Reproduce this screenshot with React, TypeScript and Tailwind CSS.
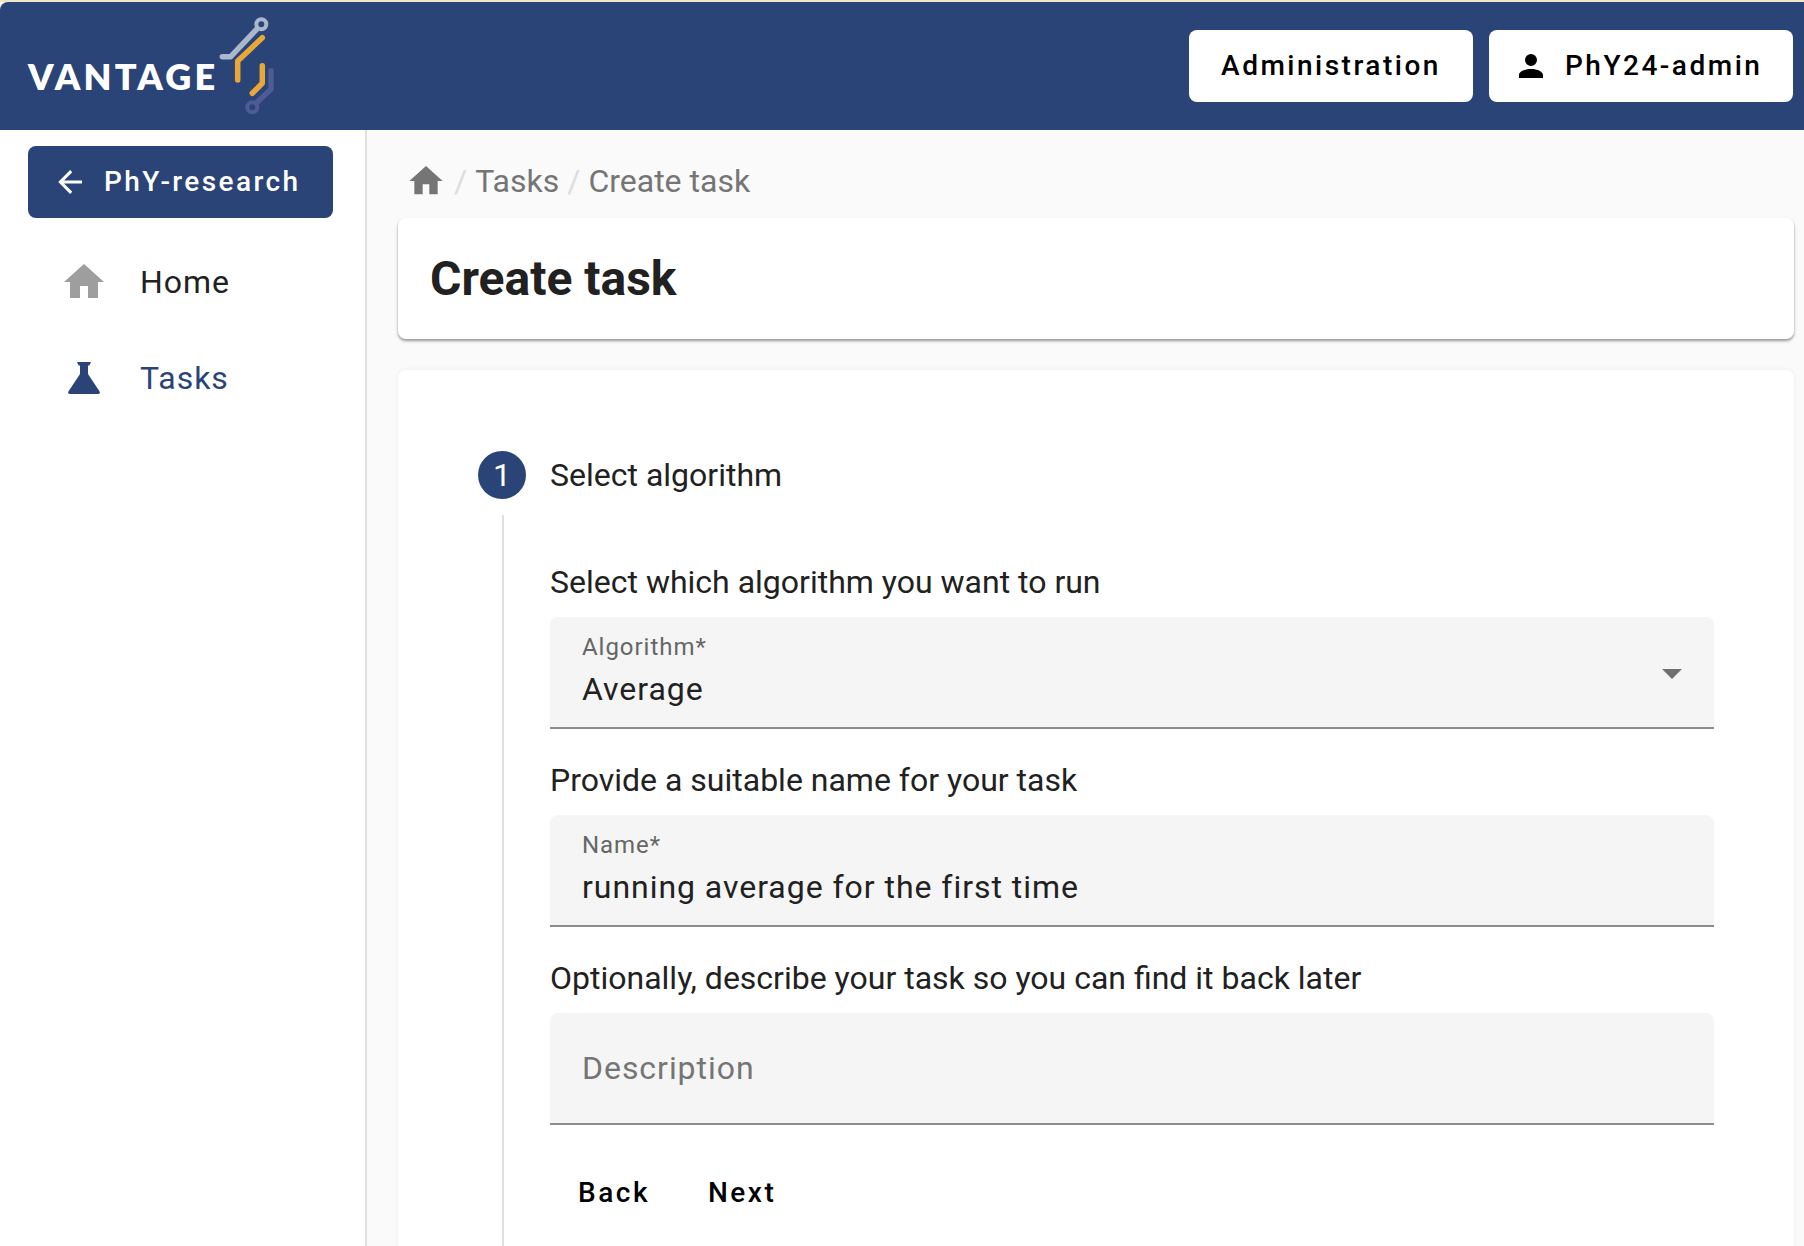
const BRAND = "#2b4478";

function MdiIcon({ path, className }: { path: string; className: string }) {
  return (
    <svg viewBox="0 0 24 24" fill="currentColor" className={className}>
      <path d={path} />
    </svg>
  );
}

const HOME = "M10 20v-6h4v6h5v-8h3L12 3 2 12h3v8z";
const ARROW_LEFT = "M20,11V13H8L13.5,18.5L12.08,19.92L4.16,12L12.08,4.08L13.5,5.5L8,11H20Z";
const ACCOUNT =
  "M12,4A4,4 0 0,1 16,8A4,4 0 0,1 12,12A4,4 0 0,1 8,8A4,4 0 0,1 12,4M12,14C16.42,14 20,15.79 20,18V20H4V18C4,15.79 7.58,14 12,14Z";
const FLASK =
  "M8.5 4h7l-.8 1.7H14V10l5.8 8.8c.4.6 0 1.2-.7 1.2H4.900c-.7 0-1.100-.6-.7-1.200L10 10V5.700H9.300z";

function Logo() {
  return (
    <div className="flex items-center">
      <span className="mt-[20px] font-['Lato',sans-serif] text-[36px] leading-none font-extrabold tracking-[0.09em] text-white">
        VANTAGE
      </span>
      <svg viewBox="220 15 60 103" fill="none" strokeLinecap="round" strokeLinejoin="round" strokeWidth="5.5" className="ml-[1px] h-[103px] w-[60px]">
        <circle cx="262.300" cy="24.300" r="5" stroke="#a9b8cc" strokeWidth="4" />
        <path d="M257 30 231.700 56.700h-8.400" stroke="#a9b8cc" />
        <path d="M263.300 37.700 238.700 61v19M263.300 65.700v17.600l-10 10" stroke="#e8a838" />
        <path d="M272 70.700v18.600l-14.500 13.500" stroke="#4e5b95" />
        <circle cx="253.300" cy="107.300" r="5" stroke="#4e5b95" strokeWidth="4" />
      </svg>
    </div>
  );
}

function HeaderButton({ children, className }: { children: React.ReactNode; className: string }) {
  return (
    <button className={`flex h-[72px] items-center rounded-[8px] bg-white text-[28px] font-medium tracking-[0.0892857em] text-black ${className}`}>
      {children}
    </button>
  );
}

function Field({ label, value, arrow }: { label: string; value: string; arrow?: boolean }) {
  return (
    <div className="relative flex h-[112px] flex-col rounded-t-[8px] border-b-2 border-[#8c8c8c] bg-[#f5f5f5] px-[32px] pt-[14px]">
      <span className="text-[24px] leading-[32px] tracking-[0.04em] text-[#666666]">{label}</span>
      <span className="mt-[6px] text-[32px] leading-[40px] tracking-[0.03em] text-[#212121]">{value}</span>
      {arrow && <div className="absolute top-[52px] right-[32px] h-0 w-0 border-x-[10px] border-t-[10px] border-x-transparent border-t-[#707070]" />}
    </div>
  );
}

export default function App() {
  return (
    <div className="flex h-[1246px] flex-col overflow-hidden bg-[#fafafa] font-['Roboto',sans-serif]">
      <div className="h-[2px] shrink-0 bg-[#efe6c8]" />
      <header className="flex h-[128px] shrink-0 items-center justify-between rounded-tl-[8px] bg-[#2b4478] pr-[11px] pl-[28px]">
        <Logo />
        <div className="flex gap-[16px]">
          <HeaderButton className="w-[284px] justify-center">Administration</HeaderButton>
          <HeaderButton className="w-[304px] gap-[16px] pl-[24px]">
            <MdiIcon path={ACCOUNT} className="h-[36px] w-[36px]" />
            PhY24-admin
          </HeaderButton>
        </div>
      </header>

      <div className="flex flex-1">
        <aside className="w-[367px] border-r-2 border-[#e0e0e0] bg-white pt-[16px]">
          <button className="ml-[28px] flex h-[72px] w-[305px] items-center gap-[16px] rounded-[8px] bg-[#2b4478] pl-[24px] text-[28px] font-medium tracking-[0.085em] text-white">
            <MdiIcon path={ARROW_LEFT} className="h-[36px] w-[36px]" />
            PhY-research
          </button>
          <nav className="mt-[16px]">
            <div className="flex h-[96px] items-center gap-[32px] pl-[60px] text-[32px] tracking-[0.03em] text-[#212121]">
              <MdiIcon path={HOME} className="h-[48px] w-[48px] text-[#9e9e9e]" />
              Home
            </div>
            <div className="flex h-[96px] items-center gap-[32px] pl-[60px] text-[32px] tracking-[0.03em] text-[#2b4478]">
              <MdiIcon path={FLASK} className="h-[48px] w-[48px]" />
              Tasks
            </div>
          </nav>
        </aside>

        <main className="flex-1 pr-[10px] pl-[31px]">
          <div className="flex h-[88px] items-center gap-[8px] pt-[14px] pl-[8px] text-[32px] text-[#757575]">
            <MdiIcon path={HOME} className="h-[40px] w-[40px]" />
            <span className="text-[#dddddd]">/</span>
            <span>Tasks</span>
            <span className="text-[#dddddd]">/</span>
            <span>Create task</span>
          </div>

          <div className="flex h-[121px] items-center rounded-[8px] bg-white pl-[32px] shadow-[0_2px_3px_rgba(0,0,0,0.4)]">
            <h1 className="text-[48px] font-bold text-[#212121]">Create task</h1>
          </div>

          <section className="mt-[31px] h-[900px] rounded-[8px] bg-white pt-[81px] pr-[80px] pl-[80px] shadow-[0_0_5px_rgba(0,0,0,0.05)]">
            <div className="flex items-center gap-[24px]">
              <div className="flex h-[48px] w-[48px] items-center justify-center rounded-full bg-[#2b4478] text-[32px] text-white">1</div>
              <span className="text-[32px] text-[#212121]">Select algorithm</span>
            </div>
            <div className="mt-[16px] ml-[24px] h-[800px] border-l-2 border-[#e0e0e0] pt-[43px] pl-[46px]">
              <p className="mb-[11px] text-[32px] leading-[48px] text-[#212121]">Select which algorithm you want to run</p>
              <Field label="Algorithm*" value="Average" arrow />
              <p className="mt-[27px] mb-[11px] text-[32px] leading-[48px] text-[#212121]">Provide a suitable name for your task</p>
              <Field label="Name*" value="running average for the first time" />
              <p className="mt-[27px] mb-[11px] text-[32px] leading-[48px] text-[#212121]">Optionally, describe your task so you can find it back later</p>
              <div className="flex h-[112px] items-center rounded-t-[8px] border-b-2 border-[#8c8c8c] bg-[#f5f5f5] px-[32px] text-[32px] tracking-[0.03em] text-[#757575]">
                Description
              </div>
              <div className="mt-[32px] flex gap-[2px] text-[28px] font-medium tracking-[0.0892857em] text-black">
                <button className="flex h-[72px] items-center px-[28px]">Back</button>
                <button className="flex h-[72px] items-center px-[28px]">Next</button>
              </div>
            </div>
          </section>
        </main>
      </div>
    </div>
  );
}
